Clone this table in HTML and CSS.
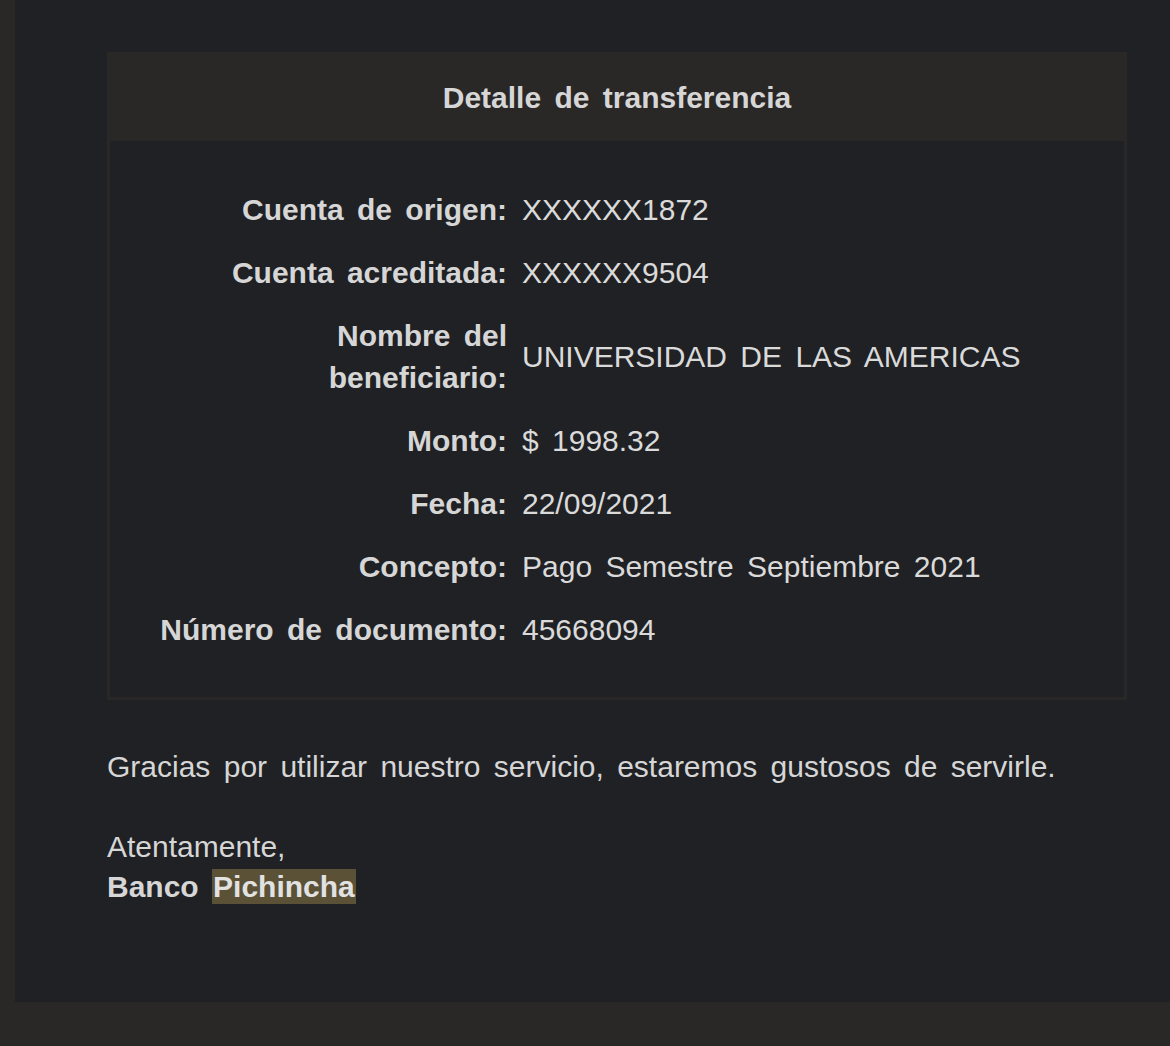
FILE: index.html
```
<html>

<head>
  <link rel="stylesheet" href="styles.css">
</head>

<body>
  <div class="mail">
    <div class="card">
      <div class="card-title">Detalle de transferencia</div>
      <div class="card-body">
        <div class="row">
          <span class="label">Cuenta de origen:</span>
          <span class="value">XXXXXX1872</span>
        </div>
        <div class="row">
          <span class="label">Cuenta acreditada:</span>
          <span class="value">XXXXXX9504</span>
        </div>
        <div class="row">
          <span class="label">Nombre del<br>beneficiario:</span>
          <span class="value">UNIVERSIDAD DE LAS AMERICAS</span>
        </div>
        <div class="row">
          <span class="label">Monto:</span>
          <span class="value">$ 1998.32</span>
        </div>
        <div class="row">
          <span class="label">Fecha:</span>
          <span class="value">22/09/2021</span>
        </div>
        <div class="row">
          <span class="label">Concepto:</span>
          <span class="value">Pago Semestre Septiembre 2021</span>
        </div>
        <div class="row">
          <span class="label">Número de documento:</span>
          <span class="value">45668094</span>
        </div>
      </div>
    </div>

    <p class="thanks">Gracias por utilizar nuestro servicio, estaremos gustosos de servirle.</p>
    <p class="signature">
      Atentamente,<br>
      <b>Banco <span class="mark">Pichincha</span></b>
    </p>
  </div>
</body>

</html>
```

FILE: styles.css
```
:root {
  --bg: #202124;
  --frame: #2a2727;
  --text: #d6d6d6;
}

* {
  margin: 0;
  padding: 0;
  box-sizing: border-box;
}

body {
  background-color: var(--frame);
  font-family: "Liberation Sans", Arial, sans-serif;
  font-size: 30px;
  color: var(--text);
  word-spacing: 5px;
}

.mail {
  margin-left: 15px;
  height: 1002px;
  background-color: var(--bg);
  padding: 52px 43px 0 92px;
}

.card {
  background-color: var(--frame);
  padding: 0 3px 3px;
}

.card-title {
  height: 89px;
  padding-top: 3px;
  display: flex;
  align-items: center;
  justify-content: center;
  font-weight: 700;
}

.card-body {
  background-color: var(--bg);
  padding: 37px 0 36px;
}

.row {
  display: grid;
  grid-template-columns: 397px 1fr;
  column-gap: 15px;
  align-items: center;
  padding: 10.5px 0;
  line-height: 42px;
}

.label {
  text-align: right;
  font-weight: 700;
  white-space: nowrap;
}

.value {
  color: #dadada;
}

.thanks {
  margin-top: 47px;
  line-height: 40px;
}

.signature {
  margin-top: 40px;
  line-height: 40px;
}

.mark {
  background-color: #5a5137;
  color: #e2e2e2;
  padding: 1px 1px;
}
```
